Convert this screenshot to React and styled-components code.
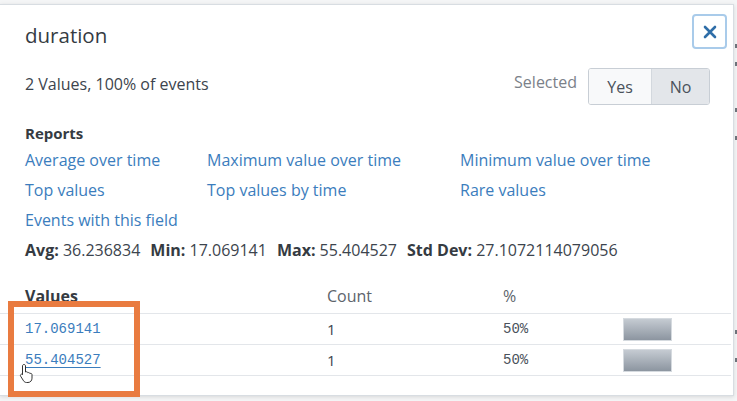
import React from 'react';
import styled, { createGlobalStyle } from 'styled-components';

const GlobalStyle = createGlobalStyle`
  html, body {
    margin: 0;
    padding: 0;
    background: #f4f5f6;
  }
  body {
    font-family: 'Open Sans', Lato, 'Liberation Sans', sans-serif;
    color: #3c444d;
  }
`;

const Page = styled.div`
  width: 737px;
  height: 401px;
  padding-top: 4px;
  box-sizing: border-box;
  overflow: hidden;
  position: relative;
`;

const Panel = styled.div`
  position: relative;
  width: 734px;
  height: 392px;
  box-sizing: border-box;
  background: #fff;
  border: 1px solid #d8dde2;
  border-left: none;
  box-shadow: 0 1px 4px rgba(0, 0, 0, 0.12);
`;

const Header = styled.div`
  display: flex;
  justify-content: space-between;
  align-items: flex-start;
  padding: 9px 6px 0 25px;
`;

const Title = styled.h2`
  margin: 9px 0 0;
  font-size: 20.5px;
  line-height: 24px;
  font-weight: 400;
  color: #353b42;
`;

const CloseButton = styled.button`
  width: 35px;
  height: 35px;
  padding: 0;
  display: flex;
  align-items: center;
  justify-content: center;
  background: #fff;
  border: 2px solid #a9cbea;
  border-radius: 4px;
  color: #2f6ea8;
`;

const Summary = styled.div`
  display: flex;
  align-items: center;
  justify-content: space-between;
  padding: 0 23px 0 25px;
  margin-top: 19px;
`;

const Count = styled.div`
  font-size: 16px;
  line-height: 20px;
  color: #3c444d;
  margin-top: -6px;
`;

const SelectWrap = styled.div`
  display: flex;
  align-items: center;
  gap: 11px;
`;

const SelectLabel = styled.span`
  font-size: 16px;
  color: #7b8189;
  margin-top: -9px;
`;

const Toggle = styled.div`
  display: flex;
  border: 1px solid #c8ced5;
  border-radius: 3px;
  overflow: hidden;
`;

const ToggleButton = styled.div`
  height: 35px;
  width: ${(p) => p.$w}px;
  display: flex;
  align-items: center;
  justify-content: center;
  font-size: 16px;
  color: #4a525b;
  background: ${(p) => (p.$active ? '#e3e6ea' : '#f8f9fa')};
  & + & {
    border-left: 1px solid #d3d8de;
  }
`;

const Section = styled.div`
  padding: 0 25px;
  margin-top: 18px;
`;

const SectionTitle = styled.div`
  font-size: 15px;
  font-weight: 700;
  line-height: 20px;
  color: #353b42;
`;

const LinkGrid = styled.div`
  display: grid;
  grid-template-columns: 182px 253px auto;
  grid-auto-rows: 30px;
  margin-top: 2px;
`;

const ReportLink = styled.a`
  font-size: 16px;
  line-height: 30px;
  color: #3b7dbd;
  text-decoration: none;
  white-space: nowrap;
`;

const Stats = styled.div`
  display: flex;
  gap: 10px;
  font-size: 16px;
  line-height: 30px;
  color: #3c444d;
  white-space: nowrap;
`;

const Stat = styled.span`
  b {
    font-weight: 700;
    color: #353b42;
  }
`;

const Table = styled.div`
  margin-top: 20px;
  width: 731px;
`;

const Row = styled.div`
  display: grid;
  grid-template-columns: 302px 176px 120px 1fr;
  align-items: center;
  height: ${(p) => (p.$head ? 29 : 31)}px;
  box-sizing: border-box;
  border-bottom: 1px solid #e3e6ea;
  padding-left: 25px;
`;

const HeadCell = styled.div`
  font-size: 16px;
  color: ${(p) => (p.$bold ? '#353b42' : '#5d646c')};
  font-weight: ${(p) => (p.$bold ? 700 : 400)};
  margin-top: -7px;
`;

const ValueLink = styled.a`
  font-family: 'Liberation Mono', 'DejaVu Sans Mono', monospace;
  font-size: 14px;
  color: #3b7dbd;
  text-decoration: ${(p) => (p.$hover ? 'underline' : 'none')};
  text-underline-offset: 3px;
`;

const Cell = styled.div`
  font-size: 15px;
  color: #3c444d;
`;

const Mono = styled.div`
  font-family: 'Liberation Mono', 'DejaVu Sans Mono', monospace;
  font-size: 14px;
  color: #4a525b;
`;

const Bar = styled.div`
  width: 49px;
  height: 23px;
  background: linear-gradient(#c5cbd2, #8c95a0);
  border: 1px solid #d5dadf;
  box-sizing: border-box;
`;

const Highlight = styled.div`
  position: absolute;
  left: 8px;
  top: 301px;
  width: 132px;
  height: 96px;
  box-sizing: border-box;
  border: 6px solid #e97b40;
  pointer-events: none;
`;

const Cursor = styled.svg`
  position: absolute;
  left: 19px;
  top: 363px;
`;

const EdgeDot = styled.span`
  position: absolute;
  right: 0;
  top: ${(p) => p.$y}px;
  width: 2px;
  height: 4px;
  background: #6d737a;
`;

const links = [
  'Average over time',
  'Maximum value over time',
  'Minimum value over time',
  'Top values',
  'Top values by time',
  'Rare values',
  'Events with this field',
];

const stats = [
  ['Avg:', '36.236834'],
  ['Min:', '17.069141'],
  ['Max:', '55.404527'],
  ['Std Dev:', '27.1072114079056'],
];

const rows = [
  { value: '17.069141', count: 1, pct: '50%' },
  { value: '55.404527', count: 1, pct: '50%', hover: true },
];

export default function App() {
  return (
    <Page>
      <GlobalStyle />
      <Panel>
        <Header>
          <Title>duration</Title>
          <CloseButton aria-label='close'>
            <svg width='14' height='14' viewBox='0 0 14 14'>
              <path
                d='M2 2 L12 12 M12 2 L2 12'
                stroke='currentColor'
                strokeWidth='2.6'
                strokeLinecap='round'
              />
            </svg>
          </CloseButton>
        </Header>
        <Summary>
          <Count>2 Values, 100% of events</Count>
          <SelectWrap>
            <SelectLabel>Selected</SelectLabel>
            <Toggle>
              <ToggleButton $w={62}>Yes</ToggleButton>
              <ToggleButton $w={57} $active>
                No
              </ToggleButton>
            </Toggle>
          </SelectWrap>
        </Summary>
        <Section>
          <SectionTitle>Reports</SectionTitle>
          <LinkGrid>
            {links.map((l) => (
              <ReportLink key={l}>{l}</ReportLink>
            ))}
          </LinkGrid>
          <Stats>
            {stats.map(([k, v]) => (
              <Stat key={k}>
                <b>{k}</b> {v}
              </Stat>
            ))}
          </Stats>
        </Section>
        <Table>
          <Row $head>
            <HeadCell $bold>Values</HeadCell>
            <HeadCell>Count</HeadCell>
            <HeadCell>%</HeadCell>
            <div />
          </Row>
          {rows.map((r) => (
            <Row key={r.value}>
              <ValueLink $hover={r.hover}>{r.value}</ValueLink>
              <Cell>{r.count}</Cell>
              <Mono>{r.pct}</Mono>
              <Bar />
            </Row>
          ))}
        </Table>
      </Panel>
      <Highlight />
      <Cursor width='18' height='20' viewBox='0 0 18 20'>
        <path
          d='M5 1.5c.9 0 1.5.6 1.5 1.5v6l.6-.2c.8-.2 1.5.2 1.7.9l.4-.1c.8-.2 1.5.2 1.7.9l.4-.1c.9-.2 1.7.4 1.7 1.3v3.5c0 2.3-1.6 4.3-4 4.3H7.6c-1.3 0-2.3-.6-3-1.6L1.7 13.3c-.5-.7-.3-1.6.4-2 .6-.4 1.4-.2 1.8.3l-.4 0V3c0-.9.6-1.5 1.5-1.5z'
          fill='#fff'
          stroke='#333'
          strokeWidth='1'
          strokeLinejoin='round'
        />
      </Cursor>
      {[44, 62, 108, 136, 330, 358].map((y) => (
        <EdgeDot key={y} $y={y} />
      ))}
    </Page>
  );
}
